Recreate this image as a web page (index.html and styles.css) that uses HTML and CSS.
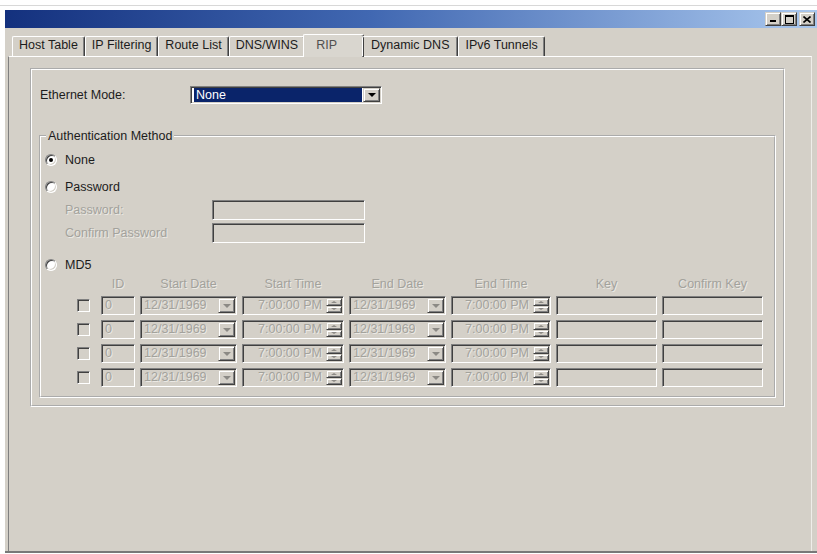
FILE: index.html
```html
<!DOCTYPE html>
<html lang="en">
<head>
	<meta charset="UTF-8">
	<title>RIP</title>
	<link rel="stylesheet" href="styles.css">
</head>
<body>
	<div class="backdrop-edge"></div>
	<div class="window">
		<div class="titlebar">
			<span class="cap-btn"><svg width="8" height="8"><rect x="1" y="5" width="6" height="2" fill="#000"/></svg></span>
			<span class="cap-btn"><svg width="9" height="9"><rect x="0.5" y="0.5" width="8" height="8" fill="none" stroke="#000"/><rect x="0" y="0" width="9" height="2" fill="#000"/></svg></span>
			<span class="cap-btn close"><svg width="8" height="7"><path d="M0.5 0.5 L7.5 6.5 M7.5 0.5 L0.5 6.5" stroke="#000" stroke-width="1.6"/></svg></span>
		</div>

		<div class="client">
			<ul class="tabs">
				<li>Host Table</li>
				<li>IP Filtering</li>
				<li>Route List</li>
				<li>DNS/WINS</li>
				<li class="active">RIP</li>
				<li class="wide">Dynamic DNS</li>
				<li>IPv6 Tunnels</li>
			</ul>

			<div class="page">
				<div class="panel">
					<div class="mode-row">
						<span class="mode-label">Ethernet Mode:</span>
						<span class="combo mode-combo">
							<span class="combo-text"><span class="highlight">None</span></span>
							<span class="btn drop"><i class="arrow-down"></i></span>
						</span>
					</div>

					<fieldset class="group">
						<legend>Authentication Method</legend>

						<div class="option first"><span class="radio checked"></span>None</div>
						<div class="option second"><span class="radio"></span>Password</div>

						<div class="pw-row"><span class="pw-label disabled">Password:</span><span class="edit pw-edit"></span></div>
						<div class="pw-row confirm"><span class="pw-label disabled">Confirm Password</span><span class="edit pw-edit"></span></div>

						<div class="option md5"><span class="radio"></span>MD5</div>

						<div class="key-grid">
							<span></span>
							<span class="col-head">ID</span>
							<span class="col-head">Start Date</span>
							<span class="col-head">Start Time</span>
							<span class="col-head">End Date</span>
							<span class="col-head">End Time</span>
							<span class="col-head">Key</span>
							<span class="col-head">Confirm Key</span>

							<!-- row 1 -->
							<span class="check"></span>
							<span class="edit id">0</span>
							<span class="combo date"><span class="combo-text">12/31/1969</span><span class="btn drop"><i class="arrow-down"></i></span></span>
							<span class="combo time"><span class="combo-text">7:00:00 PM</span><span class="spin"><span class="btn"><i class="arrow-up"></i></span><span class="btn"><i class="arrow-down"></i></span></span></span>
							<span class="combo date"><span class="combo-text">12/31/1969</span><span class="btn drop"><i class="arrow-down"></i></span></span>
							<span class="combo time"><span class="combo-text">7:00:00 PM</span><span class="spin"><span class="btn"><i class="arrow-up"></i></span><span class="btn"><i class="arrow-down"></i></span></span></span>
							<span class="edit"></span>
							<span class="edit"></span>

							<!-- row 2 -->
							<span class="check"></span>
							<span class="edit id">0</span>
							<span class="combo date"><span class="combo-text">12/31/1969</span><span class="btn drop"><i class="arrow-down"></i></span></span>
							<span class="combo time"><span class="combo-text">7:00:00 PM</span><span class="spin"><span class="btn"><i class="arrow-up"></i></span><span class="btn"><i class="arrow-down"></i></span></span></span>
							<span class="combo date"><span class="combo-text">12/31/1969</span><span class="btn drop"><i class="arrow-down"></i></span></span>
							<span class="combo time"><span class="combo-text">7:00:00 PM</span><span class="spin"><span class="btn"><i class="arrow-up"></i></span><span class="btn"><i class="arrow-down"></i></span></span></span>
							<span class="edit"></span>
							<span class="edit"></span>

							<!-- row 3 -->
							<span class="check"></span>
							<span class="edit id">0</span>
							<span class="combo date"><span class="combo-text">12/31/1969</span><span class="btn drop"><i class="arrow-down"></i></span></span>
							<span class="combo time"><span class="combo-text">7:00:00 PM</span><span class="spin"><span class="btn"><i class="arrow-up"></i></span><span class="btn"><i class="arrow-down"></i></span></span></span>
							<span class="combo date"><span class="combo-text">12/31/1969</span><span class="btn drop"><i class="arrow-down"></i></span></span>
							<span class="combo time"><span class="combo-text">7:00:00 PM</span><span class="spin"><span class="btn"><i class="arrow-up"></i></span><span class="btn"><i class="arrow-down"></i></span></span></span>
							<span class="edit"></span>
							<span class="edit"></span>

							<!-- row 4 -->
							<span class="check"></span>
							<span class="edit id">0</span>
							<span class="combo date"><span class="combo-text">12/31/1969</span><span class="btn drop"><i class="arrow-down"></i></span></span>
							<span class="combo time"><span class="combo-text">7:00:00 PM</span><span class="spin"><span class="btn"><i class="arrow-up"></i></span><span class="btn"><i class="arrow-down"></i></span></span></span>
							<span class="combo date"><span class="combo-text">12/31/1969</span><span class="btn drop"><i class="arrow-down"></i></span></span>
							<span class="combo time"><span class="combo-text">7:00:00 PM</span><span class="spin"><span class="btn"><i class="arrow-up"></i></span><span class="btn"><i class="arrow-down"></i></span></span></span>
							<span class="edit"></span>
							<span class="edit"></span>
						</div>
					</fieldset>
				</div>
			</div>
		</div>
	</div>
</body>
</html>
```

FILE: styles.css
```css
	* { box-sizing: border-box; }

	body {
		margin: 0;
		background: white;
		overflow: hidden;
		font: 12.5px/16px "Liberation Sans", Arial, sans-serif;
		color: #1c1c1c;
	}

	/**
	 * Window frame
	 */
	.backdrop-edge {
		height: 1px;
		margin-top: 5px;
		background: #d8d8d8;
	}
	.window {
		display: flex;
		flex-direction: column;
		width: 815px;
		height: 543px;
		margin: 4px 0 0 5px;
		background: #d4d0c8;
		border-bottom: 2px solid #787878;
	}
	.titlebar {
		display: flex;
		justify-content: flex-end;
		align-items: flex-start;
		height: 18px;
		padding: 2px 5px 0 0;
		background: linear-gradient(to right, #14317e, #4168b2 45%, #aac8ee);
	}
	.cap-btn {
		display: flex;
		align-items: center;
		justify-content: center;
		width: 16px; height: 14px;
		background: #d4d0c8;
		border: 1px solid;
		border-color: #d4d0c8 #404040 #404040 #d4d0c8;
		box-shadow: inset 1px 1px 0 white, inset -1px -1px 0 #808080;
	}
	.cap-btn.close { margin-left: 2px; }

	.client {
		flex: 1;
		display: flex;
		flex-direction: column;
		padding: 0 8px 0 3px;
	}

	/**
	 * Tabs
	 */
	.tabs {
		position: relative;
		z-index: 1;
		display: flex;
		align-items: flex-end;
		height: 22px;
		margin: 6px 0 0;
		padding: 0 0 0 4px;
		list-style: none;
	}
	.tabs li {
		height: 20px;
		padding: 0 6px;
		border: 1px solid;
		border-bottom: 0;
		border-color: white #404040 white white;
		border-radius: 2px 2px 0 0;
		box-shadow: inset -1px 0 0 #808080;
		white-space: nowrap;
	}
	.tabs li.wide { padding: 0 8px; }
	.tabs li.active {
		height: 23px;
		margin: 0 -2px -1px;
		padding: 2px 26px 0 12px;
		background: #d9d6cf;
		color: #505050;
	}

	.page {
		flex: 1;
		padding: 11px 0 0 21px;
		border-top: 1px solid white;
		border-left: 1px solid #808080;
		border-right: 1px solid #f0eeea;
	}

	/**
	 * Etched panel and group box
	 */
	.panel {
		width: 755px;
		padding-top: 16px;
		border: 2px groove white;
	}
	.mode-row {
		display: flex;
		align-items: center;
		height: 18px;
		padding-left: 8px;
	}
	.mode-label { width: 150px; }
	.mode-combo { width: 192px; height: 18px; }
	.highlight {
		display: block;
		height: 100%;
		margin-right: 1px;
		padding-left: 2px;
		background: #0a246a;
		color: white;
	}

	.group {
		width: 737px;
		margin: 25px 0 7px 7px;
		padding: 0 0 9px;
		border: 2px groove white;
	}
	.group legend {
		margin-left: 5px;
		padding: 0 2px;
		line-height: 14px;
	}

	.option {
		display: flex;
		align-items: center;
		gap: 8px;
		height: 16px;
		padding-left: 4px;
	}
	.option.first { margin-top: 9px; }
	.option.second { margin-top: 11px; }
	.option.md5 { margin-top: 14px; }

	.radio {
		position: relative;
		width: 12px; height: 12px;
		border-radius: 50%;
		background: white;
		border: 1px solid;
		border-color: #808080 white white #808080;
		box-shadow: inset 1px 1px 0 #404040, inset -1px -1px 0 #d4d0c8;
	}
	.radio.checked:after {
		content: '';
		position: absolute;
		top: 3px; left: 3px;
		width: 4px; height: 4px;
		border-radius: 50%;
		background: black;
	}

	.pw-row {
		display: flex;
		align-items: center;
		margin-top: 5px;
	}
	.pw-row.confirm { margin-top: 3px; }
	.pw-label {
		width: 171px;
		padding-left: 24px;
	}
	.pw-edit { width: 153px; height: 20px; }

	.disabled, .col-head, .key-grid .combo-text, .edit.id {
		color: #a3a29c;
		text-shadow: 1px 1px 0 #ebe9e4;
	}

	/**
	 * Sunken fields and raised buttons
	 */
	.edit, .combo, .check {
		display: flex;
		padding: 1px;
		background: #d4d0c8;
		border: 1px solid;
		border-color: #808080 white white #808080;
		box-shadow: inset 1px 1px 0 #404040, inset -1px -1px 0 #d4d0c8;
	}
	.mode-combo { background: white; }
	.combo-text {
		flex: 1;
		padding-left: 2px;
		line-height: 15px;
		white-space: nowrap;
		overflow: hidden;
	}
	.edit.id { padding-left: 3px; line-height: 15px; }

	.btn {
		display: flex;
		align-items: center;
		justify-content: center;
		background: #d4d0c8;
		border: 1px solid;
		border-color: #d4d0c8 #404040 #404040 #d4d0c8;
		box-shadow: inset 1px 1px 0 white, inset -1px -1px 0 #808080;
	}
	.drop { width: 17px; }

	.arrow-down, .arrow-up {
		width: 0; height: 0;
		border-left: 4px solid transparent;
		border-right: 4px solid transparent;
	}
	.arrow-down { border-top: 4px solid black; }
	.arrow-up { border-bottom: 4px solid black; }
	.key-grid .arrow-down { border-top-color: #8c8a85; }
	.key-grid .arrow-up { border-bottom-color: #8c8a85; }
	.spin .arrow-down, .spin .arrow-up {
		border-left-width: 3px;
		border-right-width: 3px;
		border-top-width: 2px;
		border-bottom-width: 2px;
	}

	/**
	 * Key table
	 */
	.key-grid {
		display: grid;
		grid-template-columns: 19px 34px 97px 102px 97px 100px 101px 101px;
		grid-template-rows: 13px repeat(4, 19px);
		gap: 5px;
		margin: 5px 0 0 36px;
	}
	.col-head {
		text-align: center;
		line-height: 13px;
		white-space: nowrap;
	}
	.check {
		align-self: center;
		width: 13px; height: 13px;
	}
	.time .combo-text {
		padding-right: 4px;
		text-align: right;
	}
	.spin {
		display: flex;
		flex-direction: column;
		width: 16px;
	}
	.spin .btn { flex: 1; }
```
